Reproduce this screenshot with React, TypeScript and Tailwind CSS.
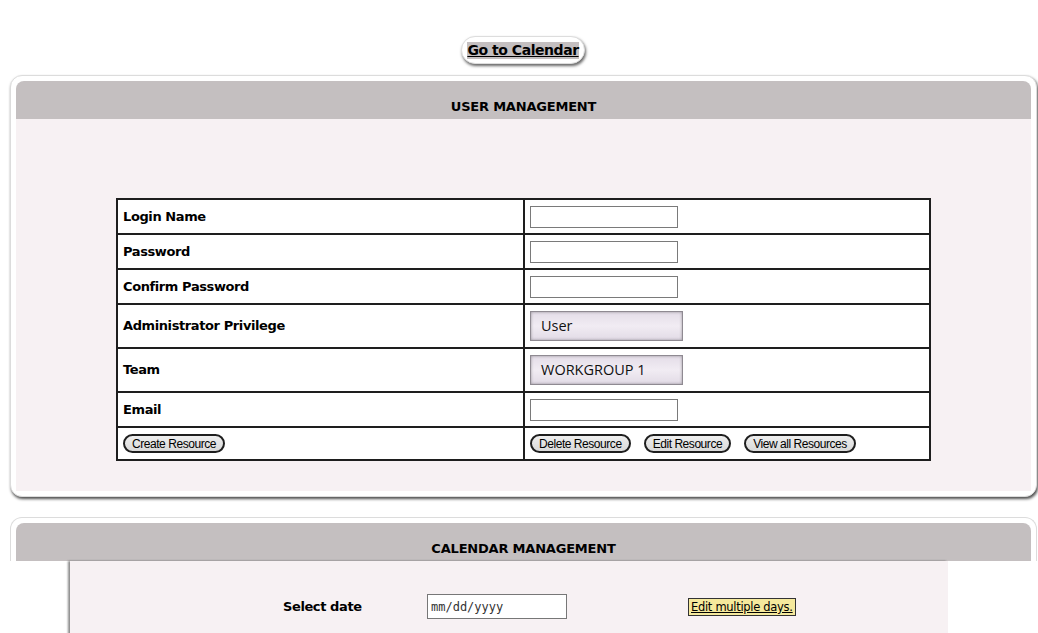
import React from 'react'

const font = { fontFamily: '"DejaVu Sans", Verdana, sans-serif' }

function PillButton({ label }: { label: string }) {
  return (
    <button
      type="button"
      className="h-[19px] px-[7px] rounded-full border-2 border-[#1e1e1e] bg-gradient-to-b from-[#eeeeee] to-[#d9d9d9] text-[12px] tracking-[-0.45px] leading-none text-black"
      style={{ fontFamily: '"Liberation Sans", Arial, sans-serif' }}
    >
      {label}
    </button>
  )
}

function TextBox() {
  return <input type="text" className="w-[148px] h-[22px] border border-[#7a7a7a] bg-white" />
}

function SelectBox({ value }: { value: string }) {
  return (
    <div
      className="w-[153px] h-[30px] flex items-center pl-[10px] border border-[#8f8a92] bg-gradient-to-b from-[#e4dde8] via-[#f1ecf3] to-[#e2dbe6] shadow-[inset_0_0_3px_rgba(0,0,0,0.35)] text-[14.5px] text-[#111]"
      style={{ fontFamily: '"Open Sans", sans-serif' }}
    >
      {value}
    </div>
  )
}

function Row({ label, h, children }: { label: string; h: string; children: React.ReactNode }) {
  return (
    <tr className={h}>
      <td className="border-2 border-[#1e1e1e] px-[5px] text-[13px] font-bold tracking-[-0.4px] align-middle">{label}</td>
      <td className="border-2 border-[#1e1e1e] px-[5px] align-middle">{children}</td>
    </tr>
  )
}

export default function App() {
  return (
    <div className="min-h-[633px] bg-white text-black overflow-hidden" style={font}>
      <div className="h-[75px] flex items-start justify-center pt-[36px] pl-[8px]">
        <div className="h-[28px] px-[5px] flex items-center rounded-full bg-white border border-[#ddd] shadow-[1px_2px_3px_rgba(0,0,0,0.6)]">
          <a href="#" className="bg-[#c4bfc0] text-[14px] font-bold tracking-[-0.45px] underline leading-[17px] text-black">
            Go to Calendar
          </a>
        </div>
      </div>

      {/* user management */}
      <div className="ml-[10px] mr-[1px] rounded-[12px] bg-white border border-[#dcdcdc] p-[5px] shadow-[1px_2px_3px_rgba(0,0,0,0.7)]">
        <div className="h-[38px] rounded-t-[8px] bg-[#c4bfc0] flex items-end justify-center pb-[3px] text-[13px] font-bold tracking-[-0.2px]">
          USER MANAGEMENT
        </div>
        <div className="bg-[#f7f1f3] pt-[79px] pb-[30px] flex justify-center">
          <table className="w-[815px] border-collapse bg-white">
            <colgroup>
              <col className="w-[407px]" />
              <col />
            </colgroup>
            <tbody>
              <Row label="Login Name" h="h-[35px]"><TextBox /></Row>
              <Row label="Password" h="h-[35px]"><TextBox /></Row>
              <Row label="Confirm Password" h="h-[35px]"><TextBox /></Row>
              <Row label="Administrator Privilege" h="h-[44px]"><SelectBox value="User" /></Row>
              <Row label="Team" h="h-[44px]"><SelectBox value="WORKGROUP 1" /></Row>
              <Row label="Email" h="h-[35px]"><TextBox /></Row>
              <tr className="h-[33px]">
                <td className="border-2 border-[#1e1e1e] px-[5px] align-middle">
                  <div className="flex">
                    <PillButton label="Create Resource" />
                  </div>
                </td>
                <td className="border-2 border-[#1e1e1e] px-[5px] align-middle">
                  <div className="flex gap-[13px]">
                    <PillButton label="Delete Resource" />
                    <PillButton label="Edit Resource" />
                    <PillButton label="View all Resources" />
                  </div>
                </td>
              </tr>
            </tbody>
          </table>
        </div>
      </div>

      {/* calendar management */}
      <div className="mt-[20px] ml-[10px] mr-[1px] rounded-t-[12px] bg-white border border-b-0 border-[#dcdcdc] px-[5px] pt-[5px]">
        <div className="h-[38px] rounded-t-[8px] bg-[#c4bfc0] flex items-end justify-center pb-[3px] text-[13px] font-bold tracking-[-0.2px]">
          CALENDAR MANAGEMENT
        </div>
      </div>
      <div className="ml-[70px] w-[878px] h-[80px] bg-[#f7f1f3] border-l-[5px] border-[#f7f1f3] shadow-[-2px_0_2px_rgba(0,0,0,0.45)] flex items-start pt-[33px]">
        <div className="w-[208px]" />
        <div className="w-[144px] text-[13px] font-bold tracking-[-0.4px] leading-[25px]">Select date</div>
        <input
          type="text"
          placeholder="mm/dd/yyyy"
          className="w-[140px] h-[25px] border border-[#777] bg-white px-[3px] text-[12px] placeholder:text-[#333]"
          style={{ fontFamily: '"DejaVu Sans Mono", monospace' }}
        />
        <div className="w-[121px]" />
        <a href="#" className="mt-[4px] h-[18px] px-[2px] border border-[#333] bg-[#f5e99c] text-[11.5px] tracking-[-0.3px] underline leading-[16px] text-black">
          Edit multiple days.
        </a>
      </div>
    </div>
  )
}
